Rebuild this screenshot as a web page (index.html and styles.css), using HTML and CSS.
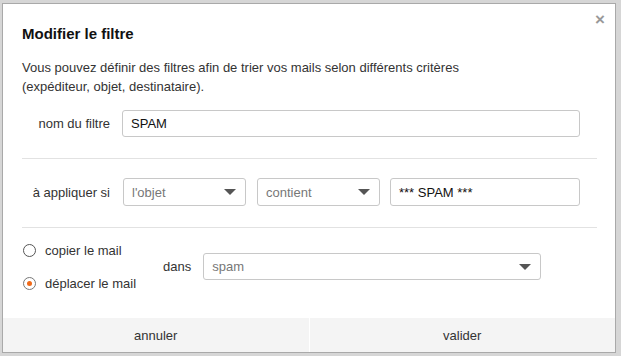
FILE: index.html
```html
<!DOCTYPE html>
<html lang="fr">
<head>
    <meta charset="UTF-8">
    <title>Modifier le filtre</title>
    <link rel="stylesheet" href="styles.css">
</head>
<body>
    <div class="dialog">
        <span class="close">&times;</span>
        <div class="dialog-body">
            <h1 class="title">Modifier le filtre</h1>
            <p class="intro">Vous pouvez définir des filtres afin de trier vos mails selon différents critères<br>(expéditeur, objet, destinataire).</p>

            <div class="row row-name">
                <label class="row-label">nom du filtre</label>
                <div class="field field-wide">SPAM</div>
            </div>

            <hr class="sep">

            <div class="row row-rule">
                <label class="row-label">à appliquer si</label>
                <div class="select select-small"><span>l'objet</span><i class="caret"></i></div>
                <div class="select select-small"><span>contient</span><i class="caret"></i></div>
                <div class="field field-value">*** SPAM ***</div>
            </div>

            <hr class="sep">

            <div class="row row-action">
                <div class="radios">
                    <div class="radio"><span class="dot"></span>copier le mail</div>
                    <div class="radio checked"><span class="dot"></span>déplacer le mail</div>
                </div>
                <span class="dans">dans</span>
                <div class="select select-folder"><span>spam</span><i class="caret"></i></div>
            </div>
        </div>

        <div class="footer">
            <button class="btn">annuler</button>
            <button class="btn">valider</button>
        </div>
    </div>
</body>
</html>
```

FILE: styles.css
```css
body {
    margin: 0;
    padding: 3px 3px 3px 2px;
    background-color: #d6d6d6;
    font-family: "Liberation Sans", Arial, sans-serif;
    font-size: 13px;
    color: #333;
}
.dialog {
    position: relative;
    width: 614px;
    height: 350px;
    box-sizing: border-box;
    background-color: #fff;
    border: 1px solid #a9a9a9;
    display: flex;
    flex-direction: column;
}
.close {
    position: absolute;
    top: 6px;
    right: 10px;
    font-size: 17px;
    font-weight: bold;
    color: #999;
}
.dialog-body {
    flex: 1;
    padding: 20px 18px 0 19px;
}
.title {
    margin: 0;
    font-size: 15px;
    line-height: 20px;
    color: #111;
}
.intro {
    margin: 14px 0 0 0;
    line-height: 19px;
}
.row {
    display: flex;
    align-items: center;
}
.row-label {
    width: 88px;
    text-align: right;
    margin-right: 12px;
}
.row-name {
    margin-top: 14px;
}
.field, .select {
    box-sizing: border-box;
    border: 1px solid #c8c8c8;
    border-radius: 3px;
    background-color: #fff;
    padding: 0 8px;
    display: flex;
    align-items: center;
}
.field {
    color: #111;
}
.field-wide {
    width: 458px;
    height: 27px;
}
.sep {
    border: none;
    border-top: 1px solid #e2e2e2;
    margin: 21px 0 0 0;
}
.row-rule {
    margin-top: 19px;
}
.row-rule .row-label {
    margin-right: 13px;
}
.select {
    height: 28px;
    color: #777;
    justify-content: space-between;
}
.select-small {
    width: 123px;
    margin-right: 11px;
}
.select-small + .select-small {
    margin-right: 10px;
}
.field-value {
    width: 190px;
    height: 28px;
}
.caret {
    width: 0;
    height: 0;
    border-left: 6px solid transparent;
    border-right: 6px solid transparent;
    border-top: 6px solid #555;
    margin-right: 1px;
}
.row-action {
    margin-top: 12px;
}
.radios {
    width: 141px;
}
.radio {
    display: flex;
    align-items: center;
    height: 20px;
    color: #333;
}
.radio + .radio {
    margin-top: 13px;
}
.dot {
    width: 13px;
    height: 13px;
    box-sizing: border-box;
    border: 1px solid #555;
    border-radius: 50%;
    margin: 0 9px 0 1px;
    display: flex;
    align-items: center;
    justify-content: center;
}
.radio.checked .dot {
    border-color: #777;
}
.radio.checked .dot::after {
    content: "";
    width: 5px;
    height: 5px;
    border-radius: 50%;
    background-color: #f06a1a;
}
.dans {
    margin-right: 12px;
}
.select-folder {
    width: 338px;
    height: 27px;
}
.footer {
    display: flex;
    height: 34px;
    background-color: #f4f4f4;
}
.btn {
    flex: 1;
    border: none;
    background-color: #f4f4f4;
    font-family: inherit;
    font-size: 13px;
    color: #333;
    padding: 0;
}
.btn + .btn {
    border-left: 1px solid #fff;
}
```
